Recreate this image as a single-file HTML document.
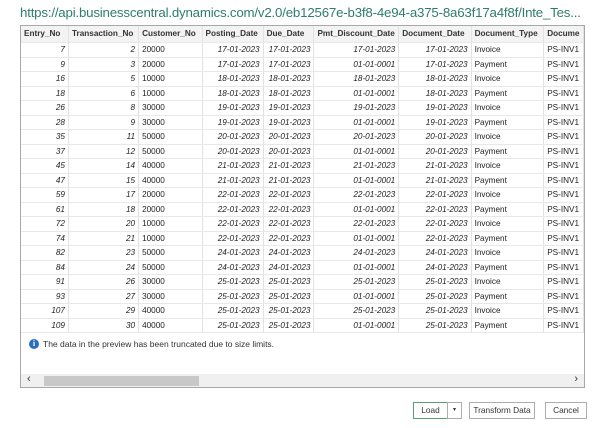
<!DOCTYPE html>
<html><head><style>
body{margin:0;width:602px;height:428px;background:#fff;font-family:"Liberation Sans",sans-serif;position:relative;overflow:hidden}
.title{position:absolute;left:20px;top:5px;font-size:13.3px;color:#2e7d6b;white-space:nowrap;letter-spacing:-0.2px}
.frame{position:absolute;left:20px;top:25px;width:565px;height:363px;border:1px solid #a8a8a8;box-sizing:border-box;overflow:hidden}
table{border-collapse:collapse;table-layout:fixed;font-size:8.2px;color:#222}
td,th{height:13.5px;line-height:13.5px;padding:0 3px;border-right:1px solid #e2e2e2;border-bottom:1px solid #e8e8e8;white-space:nowrap;overflow:hidden}
th{background:#f3f3f3;text-align:left;font-weight:bold;color:#333;height:16px;line-height:16px}
td.n,td.d{text-align:right;font-style:italic}
.info{position:absolute;left:8px;top:313px;font-size:8.5px;color:#333;display:flex;align-items:center}
.ic{width:10px;height:10px;border-radius:50%;background:#2a6fbf;color:#fff;font-size:8px;font-weight:bold;text-align:center;line-height:10px;margin-right:4px;font-family:"Liberation Serif",serif}
.sb{position:absolute;left:0;bottom:0;width:100%;height:13px;background:#f0f0f0}
.thumb{position:absolute;left:23px;top:2px;width:155px;height:10px;background:#c8c8c8}
.btn{position:absolute;top:402px;height:15px;border:1px solid #adadad;font-size:8.3px;color:#333;text-align:center;line-height:15px;box-sizing:content-box;background:#fff}
</style></head><body>
<div class="title">https://api.businesscentral.dynamics.com/v2.0/eb12567e-b3f8-4e94-a375-8a63f17a4f8f/Inte_Tes...</div>
<div class="frame">
<table>
<colgroup><col style="width:50px"><col style="width:71px"><col style="width:65px"><col style="width:62px"><col style="width:52px"><col style="width:85px"><col style="width:74px"><col style="width:74px"><col style="width:40px"></colgroup>
<tr><th>Entry_No</th><th>Transaction_No</th><th>Customer_No</th><th>Posting_Date</th><th>Due_Date</th><th>Pmt_Discount_Date</th><th>Document_Date</th><th>Document_Type</th><th>Docume</th></tr>
<tr><td class="n">7</td><td class="n">2</td><td>20000</td><td class="d">17-01-2023</td><td class="d">17-01-2023</td><td class="d">17-01-2023</td><td class="d">17-01-2023</td><td>Invoice</td><td>PS-INV1</td></tr>
<tr><td class="n">9</td><td class="n">3</td><td>20000</td><td class="d">17-01-2023</td><td class="d">17-01-2023</td><td class="d">01-01-0001</td><td class="d">17-01-2023</td><td>Payment</td><td>PS-INV1</td></tr>
<tr><td class="n">16</td><td class="n">5</td><td>10000</td><td class="d">18-01-2023</td><td class="d">18-01-2023</td><td class="d">18-01-2023</td><td class="d">18-01-2023</td><td>Invoice</td><td>PS-INV1</td></tr>
<tr><td class="n">18</td><td class="n">6</td><td>10000</td><td class="d">18-01-2023</td><td class="d">18-01-2023</td><td class="d">01-01-0001</td><td class="d">18-01-2023</td><td>Payment</td><td>PS-INV1</td></tr>
<tr><td class="n">26</td><td class="n">8</td><td>30000</td><td class="d">19-01-2023</td><td class="d">19-01-2023</td><td class="d">19-01-2023</td><td class="d">19-01-2023</td><td>Invoice</td><td>PS-INV1</td></tr>
<tr><td class="n">28</td><td class="n">9</td><td>30000</td><td class="d">19-01-2023</td><td class="d">19-01-2023</td><td class="d">01-01-0001</td><td class="d">19-01-2023</td><td>Payment</td><td>PS-INV1</td></tr>
<tr><td class="n">35</td><td class="n">11</td><td>50000</td><td class="d">20-01-2023</td><td class="d">20-01-2023</td><td class="d">20-01-2023</td><td class="d">20-01-2023</td><td>Invoice</td><td>PS-INV1</td></tr>
<tr><td class="n">37</td><td class="n">12</td><td>50000</td><td class="d">20-01-2023</td><td class="d">20-01-2023</td><td class="d">01-01-0001</td><td class="d">20-01-2023</td><td>Payment</td><td>PS-INV1</td></tr>
<tr><td class="n">45</td><td class="n">14</td><td>40000</td><td class="d">21-01-2023</td><td class="d">21-01-2023</td><td class="d">21-01-2023</td><td class="d">21-01-2023</td><td>Invoice</td><td>PS-INV1</td></tr>
<tr><td class="n">47</td><td class="n">15</td><td>40000</td><td class="d">21-01-2023</td><td class="d">21-01-2023</td><td class="d">01-01-0001</td><td class="d">21-01-2023</td><td>Payment</td><td>PS-INV1</td></tr>
<tr><td class="n">59</td><td class="n">17</td><td>20000</td><td class="d">22-01-2023</td><td class="d">22-01-2023</td><td class="d">22-01-2023</td><td class="d">22-01-2023</td><td>Invoice</td><td>PS-INV1</td></tr>
<tr><td class="n">61</td><td class="n">18</td><td>20000</td><td class="d">22-01-2023</td><td class="d">22-01-2023</td><td class="d">01-01-0001</td><td class="d">22-01-2023</td><td>Payment</td><td>PS-INV1</td></tr>
<tr><td class="n">72</td><td class="n">20</td><td>10000</td><td class="d">22-01-2023</td><td class="d">22-01-2023</td><td class="d">22-01-2023</td><td class="d">22-01-2023</td><td>Invoice</td><td>PS-INV1</td></tr>
<tr><td class="n">74</td><td class="n">21</td><td>10000</td><td class="d">22-01-2023</td><td class="d">22-01-2023</td><td class="d">01-01-0001</td><td class="d">22-01-2023</td><td>Payment</td><td>PS-INV1</td></tr>
<tr><td class="n">82</td><td class="n">23</td><td>50000</td><td class="d">24-01-2023</td><td class="d">24-01-2023</td><td class="d">24-01-2023</td><td class="d">24-01-2023</td><td>Invoice</td><td>PS-INV1</td></tr>
<tr><td class="n">84</td><td class="n">24</td><td>50000</td><td class="d">24-01-2023</td><td class="d">24-01-2023</td><td class="d">01-01-0001</td><td class="d">24-01-2023</td><td>Payment</td><td>PS-INV1</td></tr>
<tr><td class="n">91</td><td class="n">26</td><td>30000</td><td class="d">25-01-2023</td><td class="d">25-01-2023</td><td class="d">25-01-2023</td><td class="d">25-01-2023</td><td>Invoice</td><td>PS-INV1</td></tr>
<tr><td class="n">93</td><td class="n">27</td><td>30000</td><td class="d">25-01-2023</td><td class="d">25-01-2023</td><td class="d">01-01-0001</td><td class="d">25-01-2023</td><td>Payment</td><td>PS-INV1</td></tr>
<tr><td class="n">107</td><td class="n">29</td><td>40000</td><td class="d">25-01-2023</td><td class="d">25-01-2023</td><td class="d">25-01-2023</td><td class="d">25-01-2023</td><td>Invoice</td><td>PS-INV1</td></tr>
<tr><td class="n">109</td><td class="n">30</td><td>40000</td><td class="d">25-01-2023</td><td class="d">25-01-2023</td><td class="d">01-01-0001</td><td class="d">25-01-2023</td><td>Payment</td><td>PS-INV1</td></tr>
</table>
<div class="info"><div class="ic">i</div>The data in the preview has been truncated due to size limits.</div>
<div class="sb"><span style="position:absolute;left:6px;top:-1px;font-size:11px;color:#333">&#x2039;</span><div class="thumb"></div><span style="position:absolute;right:6px;top:-1px;font-size:11px;color:#333">&#x203A;</span></div>
</div>
<div class="btn" style="left:413px;width:33px;border-color:#5a9e6f">Load</div>
<div class="btn" style="left:447px;width:13px;font-size:6px">&#x25BE;</div>
<div class="btn" style="left:469px;width:64px">Transform Data</div>
<div class="btn" style="left:545px;width:40px">Cancel</div>
</body></html>
